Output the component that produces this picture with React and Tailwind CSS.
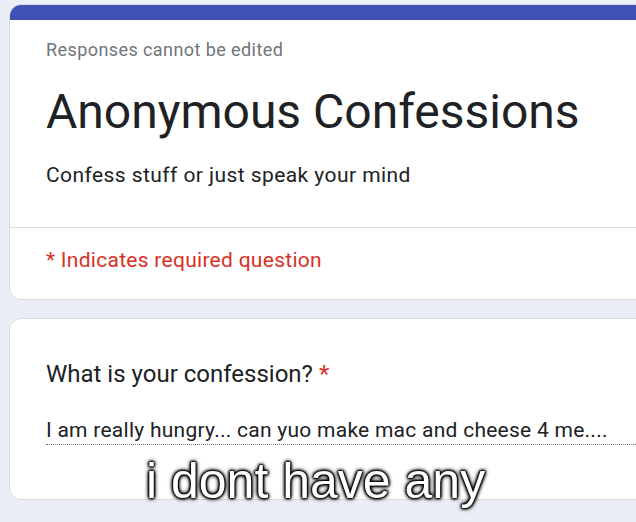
import React from 'react';

const roboto = { fontFamily: 'Roboto, "Noto Sans", Arial, sans-serif' };

export default function App() {
  return (
    <div className="relative h-[522px] w-[636px] overflow-hidden bg-[#ebedf7] pt-[4px] pl-[9px]" style={roboto}>
      {/* header card */}
      <div className="w-[720px] overflow-hidden rounded-[12px] border border-[#dadce0] bg-white">
        <div className="h-[15px] bg-[#3f51b5]" />
        <div className="pl-[36px] pt-[18px] pb-[38px]">
          <div className="text-[18px] leading-[24px] tracking-[0.42px] text-[#70757a]">Responses cannot be edited</div>
          <h1 className="mt-[22px] text-[48px] leading-[56px] text-[#202124]">Anonymous Confessions</h1>
          <p className="mt-[21px] text-[21px] leading-[28px] tracking-[0.43px] text-[#202124]">Confess stuff or just speak your mind</p>
        </div>
        <div className="border-t border-[#dadce0] pl-[36px] pt-[18px] pb-[25px]">
          <div className="text-[21px] leading-[28px] tracking-[0.28px] text-[#d93025]">* Indicates required question</div>
        </div>
      </div>

      {/* question card */}
      <div className="mt-[18px] w-[720px] rounded-[12px] border border-[#dadce0] bg-white pl-[36px] pt-[39px] pb-[54px]">
        <div className="text-[24px] leading-[32px] text-[#202124]">
          What is your confession? <span className="text-[#d93025]">*</span>
        </div>
        <div className="mt-[26px] border-b border-dotted border-[#70757a] text-[21px] leading-[28px] tracking-[0.26px] text-[#202124]">
          I am really hungry... can yuo make mac and cheese 4 me....
        </div>
      </div>

      {/* meme caption */}
      <div
        className="absolute left-[146px] top-[456px] whitespace-nowrap text-[50px] leading-[50px] text-white [text-shadow:0_0_1px_#000,0_0_1px_#000,0_0_2px_#000,0_0_2px_#000,0_0_3px_#000,0_0_3px_#000,0_0_4px_#000,0_0_5px_#000]"
        style={{ fontFamily: '"Liberation Sans", Arial, sans-serif' }}
      >
        i dont have any
      </div>
    </div>
  );
}
